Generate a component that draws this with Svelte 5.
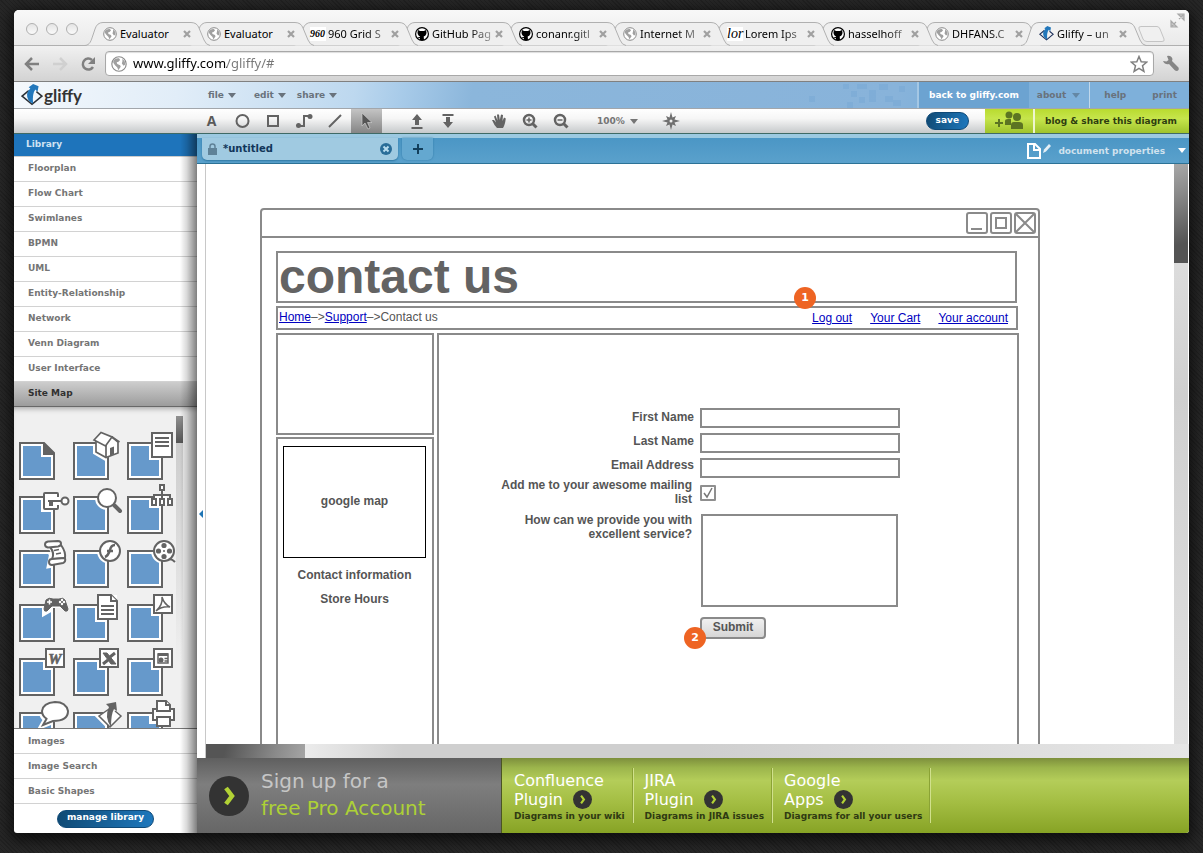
<script>
  const tabs = [
    { icon: 'globe', title: 'Evaluator' },
    { icon: 'globe', title: 'Evaluator' },
    { icon: 'grid', title: '960 Grid S', fade: true },
    { icon: 'github', title: 'GitHub Pag', fade: true },
    { icon: 'github', title: 'conanr.gitl', fade: true },
    { icon: 'globe', title: 'Internet M', fade: true },
    { icon: 'lorem', title: 'Lorem Ips', fade: true },
    { icon: 'github', title: 'hasselhoff', fade: true },
    { icon: 'globe', title: 'DHFANS.C', fade: true },
    { icon: 'gliffy', title: 'Gliffy – un', fade: true, active: true }
  ];

  const categories = [
    'Floorplan', 'Flow Chart', 'Swimlanes', 'BPMN', 'UML',
    'Entity-Relationship', 'Network', 'Venn Diagram', 'User Interface', 'Site Map'
  ];
  const more = ['Images', 'Image Search', 'Basic Shapes'];

  const tools = [
    ['text', 'oval', 'box', 'connector', 'line', 'pointer'],
    ['front', 'back'],
    ['hand', 'zoomin', 'zoomout']
  ];

  const page = 'M1 13H35V49H1Z';
  const box = '<path d="M27 3H45V21H27Z"/>';
  const shapes = [
    { name: 'Page', art: '' },
    { name: 'Home page', halo: 'M21 10L28 3L46 10V23L33 28L23 22V13Z', art: '<path d="M23 11V22L33 27.500L45 23V12L39 7Z" stroke-width="1.700"/><path d="M21 10L28 2.500L39 7L32.500 16Z" stroke-width="1.700"/><path d="M33 15V27M39 7L46.500 12" stroke-width="1.700"/><path d="M37 18L41 16.500V24L37 26Z" fill="#636363" stroke="none"/>' },
    { name: 'Form', halo: 'M25 3H45V27H25Z', art: '<path d="M25 3H45V27H25Z"/><path d="M28 8H42M28 12H42M28 16H42"/>' },
    { name: 'Login', halo: 'M25 9H41V25H25Z', art: '<path d="M39 13V10Q39 9 38 9H26Q25 9 25 10V24Q25 25 26 25H38Q39 25 39 24V21"/><path d="M42 17H29" stroke-width="2"/><path d="M32 17V22" stroke-width="4"/><circle cx="46" cy="17" r="3.500"/>' },
    { name: 'Search', halo: 'M25 14a9 9 0 1 0 18 0a9 9 0 1 0-18 0M41 21L48 28', art: '<path d="M41 21L47 27" stroke-width="4" stroke-linecap="round"/><circle cx="34" cy="14" r="9"/>' },
    { name: 'Site map', halo: 'M25 15H44V21H25ZM33 1H37V8H33ZM26 11H40V18H26Z', art: '<path d="M35 7V15M27 15V11H43V15" fill="none"/><path d="M33 1H37V6H33ZM25 15H29V21H25ZM33 15H37V21H33ZM41 15H45V21H41Z"/>' },
    { name: 'Script', halo: 'M27 5L41 3L43 10L47 24L31 27L33 17Z', art: '<path d="M31 9Q36 15 33 21L46 20Q47 14 42 7Z"/><path d="M29 9.500Q26 9 26 6.500Q26 4 29 3.500L39 3Q42 3 42 5.500Q42 8 39 8.500Z"/><path d="M33 21Q30 21 30 24Q30 27 33 27L44 25Q47 24 46 20Z"/><path d="M35 12.500L40 11.500M37 16L42 15" stroke-width="1.500"/>' },
    { name: 'Flash', halo: 'M27 13a10 10 0 1 0 20 0a10 10 0 1 0-20 0', art: '<circle cx="37" cy="13" r="10"/><path d="M42 7Q38 7 37 12Q35 18 32 19M34 13H40" fill="none" stroke-width="2.5"/>' },
    { name: 'Video', halo: 'M27 13a10 10 0 1 0 20 0a10 10 0 1 0-20 0', art: '<path d="M40 22Q44 20 48 24"/><circle cx="37" cy="13" r="10"/><g fill="#636363" stroke="none"><circle cx="37" cy="7.500" r="2.600"/><circle cx="37" cy="18.500" r="2.600"/><circle cx="31.500" cy="13" r="2.600"/><circle cx="42.500" cy="13" r="2.600"/><circle cx="37" cy="13" r="1"/></g>' },
    { name: 'Game', halo: 'M26 9Q30 4 37 7Q43 4 47 8L49 20L41 16H33L26 20Z', art: '<path d="M27 8Q30 5 34 7H40Q44 5 46 8L49 17Q49 20 46 19L41 14H33L28 19Q25 20 25 17Z" fill="#636363" stroke-width="1"/><path d="M28 10H33M30.500 7.500V12.500" stroke="#fff" stroke-width="1.500"/><g fill="#fff" stroke="none"><circle cx="41" cy="10" r="1.200"/><circle cx="45" cy="10" r="1.200"/><circle cx="43" cy="8" r="1.200"/><circle cx="43" cy="12" r="1.200"/></g>' },
    { name: 'Document', halo: 'M25 3H44V27H25Z', art: '<path d="M25 3H38L44 9V27H25Z"/><path d="M38 3V9H44M28 14H41M28 18H41M28 22H41"/>' },
    { name: 'PDF', halo: 'M27 3H45V21H27Z', art: box + '<path d="M35 5Q37 12 43 15Q35 14 29 19Q36 13 35 5Z" stroke-width="1.500"/>' },
    { name: 'Word', halo: 'M27 3H45V21H27Z', art: box, letter: 'W' },
    { name: 'Excel', halo: 'M27 3H45V21H27Z', art: box + '<path d="M30 7H34L43 18H38Z" fill="#636363" stroke-width="1"/><path d="M42 7L37 11M35 14L30 18" stroke-width="3"/>' },
    { name: 'Slides', halo: 'M27 3H45V21H27Z', art: box + '<path d="M31 8H41V17H31Z" stroke-width="1.500"/><path d="M31 8.500H41" stroke-width="3"/><circle cx="34" cy="14" r="2.500" fill="#636363" stroke="none"/><path d="M37.500 12.500H41M37.500 15H41" stroke-width="1.500"/>' },
    { name: 'Comment', halo: 'M23 12a13 10 0 1 0 26 0a13 10 0 1 0-26 0M28 18L24 25L34 21', art: '<path d="M28 18L24 25L34 21Q49 21 49 11Q47 2 36 2Q24 3 23 11Q23 16 28 19"/>' },
    { name: 'Diagram', halo: 'M26 16L36 8L47 16L37 27Z', art: '<path d="M36 9L26 16L37 27L48 16L42 11" stroke-width="1.500"/><path d="M33 4L43 2L44 11L41 9Q38 14 38 27Q31 17 36 7Z" fill="#636363" stroke="none"/>' },
    { name: 'Print', halo: 'M29 1H42V9H47V21H25V9H29Z', art: '<path d="M26 9H47V20H26Z"/><path d="M30 11V1H39L43 5V11Z"/><path d="M30 17H43V26H30Z"/><path d="M39 1V5H43"/>' }
  ];

  const plugins = [
    { top: 'Confluence', bottom: 'Plugin', note: 'Diagrams in your wiki' },
    { top: 'JIRA', bottom: 'Plugin', note: 'Diagrams in JIRA issues' },
    { top: 'Google', bottom: 'Apps', note: 'Diagrams for all your users' }
  ];
</script>

{#snippet globe(size)}
  <svg width={size} height={size} viewBox="0 0 14 14" aria-hidden="true">
    <circle cx="7" cy="7" r="6.300" fill="#fff" stroke="#8a8a8a" />
    <path d="M2 4Q4 1.500 7 2L8 3.500L6.500 5L5 5.500L5.500 7L8 8L8.500 9.500L7 11.500L6.500 12.500L5.500 10L3.500 8L2 6Z" fill="#a0a0a0" />
    <path d="M10 2.500L12 4.500L12.500 7.500L11 8.500L9.500 6.500L10 4.500Z" fill="#a0a0a0" />
  </svg>
{/snippet}

{#snippet gliffyMark(w, h, line)}
  <svg width={w} height={h} viewBox="0 0 20 20" aria-hidden="true">
    <path d="M7 6L1 11L10 18.500L19 11L14 7" fill="none" stroke={line} stroke-width="1.400" />
    <path d="M7 3Q10 1 11 0L16 2L15 7L13 5Q10 9 11 18Q5 15 5.500 9Q6 6 8.500 4Z" fill="#2277bb" />
  </svg>
{/snippet}

{#snippet favicon(kind)}
  {#if kind === 'globe'}
    {@render globe(14)}
  {:else if kind === 'github'}
    <svg width="14" height="14" viewBox="0 0 14 14" aria-hidden="true">
      <circle cx="7" cy="7" r="7" fill="#000" />
      <circle cx="7" cy="7" r="5.800" fill="#fff" />
      <path d="M3.300 3L5 4H9L10.700 3Q12 5 11.300 7Q10.500 9 8.700 9.500L9 13H5V11Q3 11.500 2.500 10L4 10.300L5.300 9.500Q3.500 9 2.700 7Q2 5 3.300 3Z" fill="#000" />
    </svg>
  {:else if kind === 'grid'}
    <span class="fav grid960">960</span>
  {:else if kind === 'lorem'}
    <span class="fav lorem">lor</span>
  {:else}
    {@render gliffyMark(15, 15, '#1c2f5a')}
  {/if}
{/snippet}

{#snippet caret()}
  <svg class="caret" width="8" height="5" viewBox="0 0 8 5" aria-hidden="true"><path d="M0 0H8L4 5Z" fill="currentColor" /></svg>
{/snippet}

{#snippet chevron(size)}
  <svg width={size} height={size} viewBox="0 0 40 40" aria-hidden="true">
    <circle cx="20" cy="20" r="20" fill="#333" />
    <path d="M17 12L23 20L17 28" fill="none" stroke="#b2d235" stroke-width="4.500" />
  </svg>
{/snippet}

{#snippet tool(kind)}
  <svg width="20" height="20" viewBox="0 0 20 20" fill="none" stroke="#636363" stroke-width="2" aria-hidden="true">
    {#if kind === 'oval'}
      <circle cx="9.500" cy="10" r="6" />
    {:else if kind === 'box'}
      <path d="M4 5H14V15H4Z" />
    {:else if kind === 'connector'}
      <path d="M4 15H9V5H15" /><circle cx="3.500" cy="14.500" r="2.500" fill="#636363" stroke="none" /><circle cx="15" cy="5.500" r="2.500" fill="#636363" stroke="none" />
    {:else if kind === 'line'}
      <path d="M3 16L15 4" />
    {:else if kind === 'pointer'}
      <path d="M5 2V15L8 12L11 18L13 17L10.500 11.500H15Z" fill="#555" stroke="#ccc" stroke-width="0.700" />
    {:else if kind === 'front'}
      <path d="M3.500 17H14.500" /><path d="M9 3L14 9H11V14H7V9H4Z" fill="#636363" stroke="none" />
    {:else if kind === 'back'}
      <path d="M3.500 4H14.500" /><path d="M9 17L14 11H11V6H7V11H4Z" fill="#636363" stroke="none" />
    {:else if kind === 'hand'}
      <path d="M7 17Q4 14 2 9L4 9L6 11.500L4 5.500L5.500 4.500L7.500 9.500L7 3.500H9L9.800 9L11 3.500L13 4L12.500 10L14 6.500L15.800 7.500Q15 14 13 17Z" fill="#636363" stroke="none" />
    {:else if kind === 'zoomin' || kind === 'zoomout'}
      <circle cx="8" cy="9" r="5" stroke-width="2.500" /><path d="M11.500 12.500L15.500 16.500" stroke-width="3" />
      <path d={kind === 'zoomin' ? 'M5.500 9H10.500M8 6.500V11.500' : 'M5.500 9H10.500'} stroke-width="1.500" />
    {/if}
  </svg>
{/snippet}

<div class="desk">
  <div class="window">
    <header class="chrome">
      <div class="strip">
        <div class="lights"><i></i><i></i><i></i></div>
        {#each tabs as tab, i}
          <div class="tab" style:z-index={tab.active ? 20 : 10 - i}>
            <svg class="tabshape" width="125" height="25" viewBox="0 0 125 25" aria-hidden="true">
              <path d="M0 24.500C5 24 6 20 8 14L10 8Q12 1.500 18 1.500H106Q112 1.500 114 7L119 19Q121 24 125 24.500" fill={tab.active ? '#f1f1f1' : '#efefef'} stroke="#b0b0b0" />
            </svg>
            {@render favicon(tab.icon)}
            <span class="tabtitle" class:fade={tab.fade}>{tab.title}</span>
            <button class="x" aria-label="Close tab"><svg width="8" height="8" viewBox="0 0 8 8"><path d="M1 1L7 7M7 1L1 7" stroke="#a0a0a0" stroke-width="2.200" /></svg></button>
          </div>
        {/each}
        <button class="newtab" aria-label="New tab"><svg width="28" height="16" viewBox="0 0 28 16"><path d="M1 3Q0 .5 3 .5H19Q21 .5 22 3L26 13Q27 15.500 24 15.500H9Q6 15.500 5 13Z" fill="#f0f0f0" stroke="#c4c4c4" /></svg></button>
        <svg class="full" width="15" height="15" viewBox="0 0 15 15" fill="none" stroke="#a8a8a8" stroke-width="1.500" aria-hidden="true"><path d="M8 1H14V7Z M13 2L9 6" fill="#c8c8c8" stroke-width="1.200" /><path d="M1 8V14H7Z M6 9L2 13" fill="#c8c8c8" stroke-width="1.200" /></svg>
      </div>
      <div class="navbar">
        <svg width="16" height="16" viewBox="0 0 16 16" fill="none" stroke="#808080" stroke-width="2.500" aria-hidden="true"><path d="M15 8H3M8 2L2 8L8 14" /></svg>
        <svg width="16" height="16" viewBox="0 0 16 16" fill="none" stroke="#d0d0d0" stroke-width="2.500" aria-hidden="true"><path d="M1 8H13M8 2L14 8L8 14" /></svg>
        <svg width="16" height="16" viewBox="0 0 16 16" fill="none" stroke="#808080" stroke-width="2.500" aria-hidden="true"><path d="M13 11A5.500 5.500 0 1 1 12 4" /><path d="M15 1V8H8Z" fill="#808080" stroke="none" /></svg>
        <div class="address">
          {@render globe(16)}
          <input class="url" type="text" aria-label="Address" value="www.gliffy.com/gliffy/#" />
          <svg width="18" height="18" viewBox="0 0 18 18" aria-hidden="true"><path d="M9 1.500L11.200 6.700L16.800 7.100L12.500 10.800L13.900 16.300L9 13.300L4.100 16.300L5.500 10.800L1.200 7.100L6.800 6.700Z" fill="#fff" stroke="#808080" stroke-width="1.500" /></svg>
        </div>
        <svg width="18" height="18" viewBox="0 0 18 18" aria-hidden="true"><path d="M5 1Q9 0 10.500 4L10 6L16.500 12.500Q17.500 15 15 16Q13.500 16 12.500 15L7 9Q3 10 1 6L4.500 6.500L6.500 5Z" fill="#858585" /></svg>
      </div>
    </header>

    <div class="brandbar">
      <a class="logo" href="#home">{@render gliffyMark(22, 22, '#2b3138')}<span>gliffy</span></a>
      <nav class="menus">
        <button>file {@render caret()}</button>
        <button>edit {@render caret()}</button>
        <button>share {@render caret()}</button>
      </nav>
      <svg class="mosaic" width="108" height="26" viewBox="0 0 108 26" aria-hidden="true">
        <g fill="#6fa3d0" opacity="0.350"><path d="M0 14h6v6H0zM34 2h6v5h-6zM42 9h6v6h-6zM48 2h10v5H48zM60 8h7v12h-7zM50 15h6v6h-6zM70 2h9v6h-9zM76 14h8v6h-8zM90 4h6v6h-6zM84 18h8v6h-8zM38 20h6v6h-6z" /></g>
      </svg>
      <a class="back" href="#back">back to gliffy.com</a>
      <button class="about">about {@render caret()}</button>
      <a class="help" href="#help">help</a>
      <a class="print" href="#print">print</a>
    </div>

    <div class="toolbar">
      {#each tools as group}
        <div class="group">
          {#each group as kind}
            <button class:on={kind === 'pointer'} aria-label={kind}>
              {#if kind === 'text'}<span class="glyphA">A</span>{:else}{@render tool(kind)}{/if}
            </button>
          {/each}
        </div>
      {/each}
      <button class="zoom">100% {@render caret()}</button>
      <button class="compass" aria-label="Navigator">
        <svg width="18" height="18" viewBox="0 0 18 18" aria-hidden="true"><path d="M9 0L10.500 5.500L14 4L12.500 7.500L18 9L12.500 10.500L14 14L10.500 12.500L9 18L7.500 12.500L4 14L5.500 10.500L0 9L5.500 7.500L4 4L7.500 5.500Z" fill="#707070" /><circle cx="9" cy="9" r="1.500" fill="#eee" /></svg>
      </button>
      <button class="pill save">save</button>
      <button class="green people" aria-label="Add people">
        <svg width="30" height="20" viewBox="0 0 30 20" aria-hidden="true"><path d="M1 12H9M5 8V16" stroke="#5c7422" stroke-width="2" /><g fill="#5c7422"><circle cx="15" cy="4" r="3.500" /><path d="M11 14V10Q11 8 14 8H17V14Z" /><circle cx="23" cy="6" r="4" /><path d="M17 18V14Q17 11 20 11H25Q29 11 29 14V18Z" /></g></svg>
      </button>
      <button class="green share">blog &amp; share this diagram</button>
    </div>

    <div class="work">
      <aside>
        <h2>Library</h2>
        <ul>
          {#each categories as name}
            <li class:current={name === 'Site Map'}><a href="#{name}">{name}</a></li>
          {/each}
        </ul>
        <div class="palette">
          <svg class="defs" width="0" height="0" aria-hidden="true"><clipPath id="sheet"><path d="M2 14H34V48H2Z" /></clipPath></svg>
          <div class="shapes">
            {#each shapes as s, i}
              <svg width="54" height="54" viewBox="0 0 54 54" role="img" aria-label={s.name}>
                {#if i === 0}
                  <path d="M1 13H25L35 23V49H1Z" fill="#6699cb" stroke="#636363" stroke-width="2" />
                  <path d="M3 15H23V26H33V47H3Z" fill="none" stroke="#fff" stroke-width="2" />
                  <path d="M24 12L36 24V25H24Z" fill="#636363" />
                {:else}
                  <path d={page} fill="#6699cb" />
                  <path d="M3 15H33V47H3Z" fill="none" stroke="#fff" stroke-width="2" />
                  <path d={s.halo} fill="#fff" stroke="#fff" stroke-width="6" clip-path="url(#sheet)" />
                  <path d={page} fill="none" stroke="#636363" stroke-width="2" />
                  <path d={s.halo} fill="#fff" />
                  <g fill="#fff" stroke="#636363" stroke-width="2">{@html s.art}</g>
                  {#if s.letter}<text x="36" y="18" text-anchor="middle" class="letter">{s.letter}</text>{/if}
                {/if}
              </svg>
            {/each}
          </div>
          <div class="palettebar"><i></i></div>
        </div>
        <ul class="more">
          {#each more as name}<li><a href="#{name}">{name}</a></li>{/each}
        </ul>
        <div class="manage"><button class="pill">manage library</button></div>
      </aside>

      <main>
        <div class="doctabs">
          <div class="doctab">
            <svg width="9" height="12" viewBox="0 0 9 12" aria-hidden="true"><path d="M2 6V3.500Q2 1 4.500 1T7 3.500V6" fill="none" stroke="#5f8298" stroke-width="1.500" /><path d="M0 5H9V12H0Z" fill="#5f8298" /></svg>
            <span>*untitled</span>
            <button aria-label="Close document"><svg width="12" height="12" viewBox="0 0 12 12"><circle cx="6" cy="6" r="6" fill="#2a6d98" /><path d="M3.500 3.500L8.500 8.500M8.500 3.500L3.500 8.500" stroke="#b8dcee" stroke-width="2" /></svg></button>
          </div>
          <button class="adddoc" aria-label="New document"><svg width="10" height="10" viewBox="0 0 10 10"><path d="M0 5H10M5 0V10" stroke="#123f5c" stroke-width="2" /></svg></button>
          <button class="props">
            <svg width="24" height="16" viewBox="0 0 24 16" aria-hidden="true"><path d="M1 1H8L13 6V15H1ZM7 1V7H13" fill="none" stroke="#fff" stroke-width="2" /><path d="M16 10L17 6.500L22 1L24 3L19 8.500Z" fill="#e4eff6" /></svg>
            <span>document properties</span>
            {@render caret()}
          </button>
        </div>

        <div class="stage">
          <div class="gutter"><svg width="5" height="8" viewBox="0 0 5 8" aria-hidden="true"><path d="M4 0V8L0 4Z" fill="#1f75b5" /></svg></div>
          <div class="canvas">
            <section class="mock">
              <div class="titlebar">
                <svg width="70" height="22" viewBox="0 0 70 22" fill="none" stroke="#8a8a8a" stroke-width="2" aria-hidden="true">
                  <rect x="1" y="1" width="20" height="20" rx="2" /><rect x="25" y="1" width="20" height="20" rx="2" /><rect x="49" y="1" width="20" height="20" rx="2" />
                  <path d="M5 17H16M30 6H40V16H30ZM50 2L68 20M68 2L50 20" />
                </svg>
              </div>
              <div class="body">
                <h1 class="frame">contact us</h1>
                <div class="frame crumbs">
                  <p><a href="#home">Home</a>–&gt;<a href="#support">Support</a>–&gt;Contact us</p>
                  <nav><a href="#logout">Log out</a><a href="#cart">Your Cart</a><a href="#account">Your account</a></nav>
                  <b class="badge one">1</b>
                </div>
                <div class="cols">
                  <div class="left">
                    <div class="frame blank"></div>
                    <div class="frame info">
                      <div class="map">google map</div>
                      <p>Contact information</p>
                      <p>Store Hours</p>
                    </div>
                  </div>
                  <form class="frame" onsubmit={(e) => e.preventDefault()}>
                    <div class="labels">
                      <label for="first">First Name</label>
                      <label for="last">Last Name</label>
                      <label for="email">Email Address</label>
                      <label class="long" for="list">Add me to your awesome mailing list</label>
                      <label class="long" for="how">How can we provide you with excellent service?</label>
                    </div>
                    <div class="fields">
                      <input id="first" type="text" />
                      <input id="last" type="text" />
                      <input id="email" type="text" />
                      <span class="tick"><input id="list" type="checkbox" checked /><svg width="16" height="16" viewBox="0 0 16 16" aria-hidden="true"><path d="M4 8L7 12L12 3" fill="none" stroke="#777" stroke-width="1.500" /></svg></span>
                      <textarea id="how"></textarea>
                      <span class="send"><button class="submit">Submit</button><b class="badge two">2</b></span>
                    </div>
                  </form>
                </div>
              </div>
            </section>
          </div>
          <div class="vbar"><i></i></div>
          <div class="hbar"><i></i></div>
        </div>

        <footer>
          <a class="promo" href="#signup">
            {@render chevron(40)}
            <span>Sign up for a<br /><em>free Pro Account</em></span>
          </a>
          {#each plugins as p}
            <a class="plugin" href="#{p.top}">
              <span class="name">{p.top}</span>
              <span class="name">{p.bottom} {@render chevron(19)}</span>
              <small>{p.note}</small>
            </a>
          {/each}
        </footer>
      </main>
    </div>
  </div>
</div>

<style>
  :global(body) { margin: 0; background: #232323; }
  * { box-sizing: border-box; }
  button { border: 0; padding: 0; margin: 0; background: none; font: inherit; color: inherit; }
  a { color: inherit; text-decoration: none; }
  svg { display: block; flex: none; }
  ul, h1, h2, p { margin: 0; padding: 0; list-style: none; }

  .desk { height: 100vh; padding: 10px 14px 20px; background: repeating-linear-gradient(45deg, #212121 0 1px, #272727 1px 3px); font: bold 9px/12px "DejaVu Sans", Verdana, sans-serif; color: #757575; }
  .window { position: relative; height: 100%; display: flex; flex-direction: column; overflow: hidden; border-radius: 5px 5px 3px 3px; background: #fff; box-shadow: 0 4px 14px 4px rgba(0, 0, 0, 0.6); }

  .chrome { flex: none; font: 11px/14px "Noto Sans", "Open Sans", sans-serif; color: #000; }
  .strip { height: 36px; padding-top: 11px; display: flex; align-items: flex-start; background: linear-gradient(#f8f8f8, #e9e9e9); box-shadow: inset 0 -1px #b0b0b0; }
  .lights { width: 71px; display: flex; gap: 8px; padding: 2px 0 0 12px; }
  .lights i { width: 12px; height: 12px; border: 1px solid #b0b0b0; border-radius: 50%; background: linear-gradient(#e4e4e4, #fafafa); }
  .tab { position: relative; flex: none; width: 125px; height: 25px; margin-right: -21px; padding: 0 18px; display: flex; align-items: center; }
  .tab > :global(svg), .tab > span { position: relative; }
  .tab > .tabshape { position: absolute; left: 0; top: 0; }
  .tabtitle { flex: 1; margin-left: 3px; white-space: nowrap; }
  .fade { mask-image: linear-gradient(90deg, #000 60%, rgba(0, 0, 0, 0.25)); }
  .x { position: relative; padding: 1px; }
  .fav { width: 16px; margin-right: -1px; background: #fff; font-family: "Liberation Serif", serif; font-style: italic; }
  .grid960 { font-size: 10px; font-weight: bold; margin-left: -1px; }
  .lorem { font-size: 14px; }
  .newtab { margin: 5px 0 0 13px; }
  .full { margin: -8px 4px 0 auto; }
  .navbar { height: 36px; display: flex; align-items: center; padding: 0 9px 0 10px; gap: 12px; background: linear-gradient(#f1f1f1, #d3d3d3); border-bottom: 1px solid #808080; }
  .address { flex: 1; height: 25px; margin: 0 -4px 0 -3px; display: flex; align-items: center; gap: 6px; padding: 0 5px; background: #fff; border: 1px solid #a8a8a8; border-radius: 4px; box-shadow: inset 0 1px 1px #ddd; }
  .url { flex: 1; min-width: 0; border: 0; padding: 0 0 1px; outline: 0; font: 13px/18px "Noto Sans", sans-serif; color: transparent; background: linear-gradient(90deg, #000 94px, #777 94px); background-clip: text; -webkit-background-clip: text; }

  .brandbar { flex: none; height: 27px; display: flex; align-items: stretch; border-bottom: 1px solid #a2a6ab; color: #69727c; background: linear-gradient(100deg, #f4f8fc 0, #e1edf8 14%, #bdd8ef 29%, #a8cbe9 33%, #8bb6db 39%, #88b3da 75%, #7eb0da 79%); }
  .brandbar button, .brandbar a { display: flex; align-items: center; gap: 4px; }
  .logo { padding-left: 7px; width: 194px; color: #333; font: bold 17px/24px Lato, sans-serif; }
  .logo span { margin-left: -3px; padding-top: 2px; }
  .menus { display: flex; gap: 18px; }
  .menus button:last-child { margin-left: -7px; }
  .mosaic { margin-left: auto; }
  .back { padding: 0 10px; color: #fff; background: #6ca3d1; border-left: 2px solid #a4c7e4; }
  .about { padding: 0 9px 0 8px; border-right: 1px solid #c0d8ec; }
  .about :global(.caret) { margin-left: 2px; color: #6487a4; }
  .help { padding: 0 13px 0 14px; }
  .print { padding: 0 12px 0 13px; }

  .toolbar { flex: none; height: 25px; display: flex; align-items: stretch; padding-left: 182px; background: linear-gradient(#fff 0, #f6f6f6 40%, #c6c9cb 100%); border-bottom: 1px solid #3f6a66; }
  .group { display: flex; margin-right: 20px; }
  .group button { width: 31px; display: grid; place-items: center; }
  .group .on { background: linear-gradient(#c4c4c4, #858585); }
  .glyphA { font: bold 14px/20px "Open Sans", sans-serif; color: #5a5a5a; }
  .zoom { display: flex; align-items: center; gap: 5px; }
  .compass { margin-left: 24px; }
  .compass, .people { display: grid; place-items: center; }
  .pill { height: 18px; padding: 0 9px 3px; border-radius: 9px; color: #fff; background: linear-gradient(100deg, #104a74, #1e78bd); border: 1px solid #0f4a78; }
  .save { margin: 3px 16px 0 auto; }
  .green { background: linear-gradient(#b9db2f, #c6e54c 40%, #9fc32c); color: #2e3d10; }
  .people { width: 50px; border-right: 2px solid #eef5cf; }
  .share { padding: 0 12px 0 10px; }

  .work { flex: 1; min-height: 0; display: flex; }
  aside { position: relative; flex: none; width: 183px; display: flex; flex-direction: column; }
  aside::after { content: ""; position: absolute; inset: 0 0 0 auto; width: 17px; background: linear-gradient(90deg, transparent, rgba(0, 0, 0, 0.15) 40%, rgba(0, 0, 0, 0.5)); pointer-events: none; }
  h2 { height: 23px; padding-left: 12px; font: bold 9px/20px "DejaVu Sans", sans-serif; color: #cfe2f2; background: #1e74bb; border-bottom: 1px solid #ccc; }
  li { height: 25px; padding-left: 14px; line-height: 22px; border-bottom: 1px solid #d2d2d2; }
  .current { color: #303030; background: linear-gradient(#cdcdcd, #9c9c9c); border-color: #686868; }
  .palette { flex: 1; min-height: 0; display: flex; background: #f0f0f0; box-shadow: inset 0 5px 5px -3px #aaa; overflow: hidden; }
  .shapes { width: 162px; margin: 23px 0 0 5px; display: grid; grid-template-columns: repeat(3, 54px); grid-auto-rows: 54px; }
  .letter { font: italic bold 15px "Liberation Serif", serif; fill: #636363; stroke: #636363; stroke-width: 0.6px; }
  .palettebar { width: 7px; margin: 9px 0 0 -5px; background: linear-gradient(#c8c8c8, #f0f0f0 80%); }
  .palettebar i { display: block; height: 27px; background: linear-gradient(#909090, #555); }
  .more { border-top: 1px solid #777; }
  .more li { line-height: 24px; }
  .manage { height: 29px; display: flex; justify-content: center; align-items: center; }

  main { flex: 1; min-width: 0; display: flex; flex-direction: column; }
  .doctabs { flex: none; height: 30px; display: flex; padding: 0 3px 3px 5px; gap: 4px; background: linear-gradient(#4b96c5, #5aa1cc); border-top: 4px solid #9cc9e1; border-bottom: 1px solid #2c7296; }
  .doctab { width: 196px; display: flex; align-items: center; gap: 6px; padding: 0 6px; border-radius: 0 0 5px 5px; background: #a0cae1; color: #12365a; font-size: 10px; box-shadow: 0 1px 2px #2d76a2; }
  .doctab button { margin-left: auto; }
  .adddoc { width: 31px; display: grid; place-items: center; border-radius: 0 0 5px 5px; background: #64a8d0; box-shadow: 0 0 2px #2d76a2; }
  .props { margin-left: auto; display: flex; align-items: center; gap: 7px; color: #d0e2ee; padding-top: 3px; }
  .props :global(.caret) { margin-left: 6px; color: #fff; }

  .stage { flex: 1; min-height: 0; display: grid; grid-template: minmax(0, 1fr) 14px / 9px minmax(0, 1fr) 15px; background: #fff; }
  .gutter { grid-row: 1 / 3; border-right: 1px solid #c8c8c8; display: grid; place-items: center; padding-top: 106px; }
  .canvas { overflow: hidden; padding: 44px 0 0 54px; }
  .vbar { background: linear-gradient(#e6e6e6, #cfcfcf 40%, #e0e0e0); border-right: 1px solid #fff; }
  .vbar i { display: block; height: 99px; background: linear-gradient(165deg, #a8a8a8, #8a8a8a 30%, #545454 80%); }
  .hbar { grid-column: 2 / 4; background: linear-gradient(90deg, #ececec 10%, #cfcfcf 20%, #cfcfcf 50%, #e6e6e6); }
  .hbar i { display: block; width: 99px; height: 14px; background: linear-gradient(105deg, #555 20%, #8a8a8a 70%, #a5a5a5); }

  .mock { width: 780px; height: 800px; border: 2px solid #8a8a8a; border-radius: 4px 4px 0 0; font: 12px/14px "Liberation Sans", Arial, sans-serif; color: #555; }
  .titlebar { height: 28px; padding: 2px; display: flex; justify-content: flex-end; border-bottom: 2px solid #8a8a8a; }
  .body { height: 740px; width: 743px; margin: 13px 0 0 14px; display: flex; flex-direction: column; }
  .frame { border: 2px solid #8a8a8a; }
  h1 { height: 52px; margin-right: 2px; padding-left: 1px; font-size: 48px; line-height: 48px; font-weight: bold; color: #636363; }
  .crumbs { position: relative; height: 24px; margin: 3px 1px 3px 0; display: flex; justify-content: space-between; padding: 3px 8px 0 1px; }
  .crumbs p { margin-top: -1px; }
  .crumbs a { color: #0000c0; text-decoration: underline; }
  .crumbs nav { display: flex; gap: 18px; }
  .badge { position: absolute; width: 22px; height: 22px; border-radius: 50%; background: #ee6423; color: #fff; text-align: center; font: bold 11px/21px "DejaVu Sans", sans-serif; }
  .one { left: 516px; top: -21px; }
  .cols { flex: 1; display: flex; gap: 3px; }
  .left { width: 158px; display: flex; flex-direction: column; gap: 2px; }
  .blank { height: 102px; }
  .info { flex: 1; padding: 7px 6px 0 5px; text-align: center; font-weight: bold; }
  .map { height: 112px; margin-bottom: 10px; padding-bottom: 2px; border: 1px solid #000; display: grid; place-items: center; }
  .info p { margin-bottom: 10px; }
  form { flex: 1; display: flex; gap: 6px; padding: 70px 0 0 54px; font-weight: bold; }
  .labels { width: 201px; display: flex; flex-direction: column; text-align: right; line-height: 24px; }
  .labels .long { margin: 1px 2px 6px 0; line-height: 14px; }
  .fields { display: flex; flex-direction: column; gap: 5px; padding-top: 3px; }
  .fields input[type="text"] { width: 200px; height: 20px; border: 2px solid #8a8a8a; padding: 0 3px; background: #fff; }
  .tick { display: grid; margin: 2px 0 8px; width: 16px; height: 16px; }
  .tick > * { grid-area: 1 / 1; }
  .tick input { appearance: none; margin: 0; width: 16px; height: 16px; border: 2px solid #8f8f8f; border-radius: 1px; }
  textarea { width: 197px; height: 93px; margin: 0 0 5px 1px; border: 2px solid #8a8a8a; padding: 2px; resize: none; background: #fff; }
  .send { position: relative; width: 66px; }
  .submit { width: 66px; height: 22px; padding-bottom: 2px; border: 2px solid #8a8a8a; border-radius: 4px; color: #555; background: linear-gradient(#f0f0f0, #d6d6d6); }
  .two { left: -16px; top: 10px; }

  footer { flex: none; height: 75px; display: flex; background: linear-gradient(#7d8f3c 0, #9cb54c 13%, #b4cd59 30%, #a3bd42 60%, #87a325 100%); }
  .promo { width: 305px; margin-right: 1px; padding: 0 12px; display: flex; align-items: center; gap: 12px; font: 20px/27px "DejaVu Sans", sans-serif; color: #c6c6c6; background: linear-gradient(#5f5f5f, #7e7e7e 35%, #666); border-right: 1px solid #4b5523; }
  .promo span { padding-bottom: 2px; }
  .promo em { font-style: normal; color: #add136; }
  .plugin { margin: 10px 0; padding: 3px 8px 0 11px; border-right: 1px solid #d0e08c; box-shadow: inset -1px 0 #8ba335; color: #2f3a12; }
  .name { display: flex; align-items: center; gap: 10px; height: 19px; font: 16px/19px "DejaVu Sans", sans-serif; color: #fff; }
  small { display: block; font-size: 9px; line-height: 14px; }
</style>
